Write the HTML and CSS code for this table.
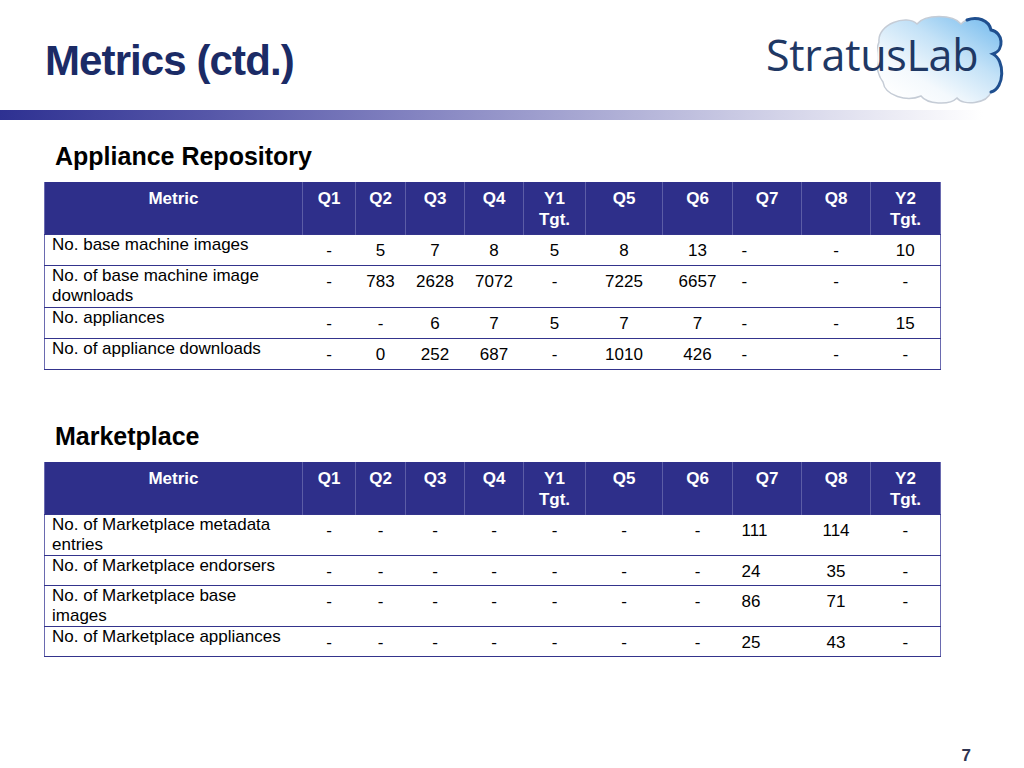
FILE: index.html
```html
<!DOCTYPE html>
<html>
<head>
<meta charset="utf-8">
<link rel="stylesheet" href="styles.css">
</head>
<body>
<div class="slide">
  <header class="header">
    <h1 class="title">Metrics (ctd.)</h1>
    <div class="logo">
      <svg class="cloud" viewBox="0 0 128 90" width="128" height="90">
        <defs>
          <linearGradient id="cg" x1="0.95" y1="0.05" x2="0.15" y2="0.95">
            <stop offset="0" stop-color="#79bdee"/>
            <stop offset="0.4" stop-color="#c4e2f7"/>
            <stop offset="0.75" stop-color="#f4f9fd"/>
            <stop offset="1" stop-color="#ffffff"/>
          </linearGradient>
        </defs>
        <path d="M2 28 C0 10 30 0 40 10 C48 0 76 0 84 10 C92 2 112 4 114 16 C126 18 128 36 116 40 C128 46 128 74 114 78 C110 90 86 92 80 84 C72 92 50 90 44 82 C30 88 8 82 6 68 C-2 58 -2 38 2 28 Z" fill="url(#cg)" stroke="#c5ccd6" stroke-width="1.5"/>
        <path d="M90 6 C100 2 112 6 114 16 C126 18 128 36 116 40 C128 46 128 74 114 78" fill="none" stroke="#1f4f8f" stroke-width="3" stroke-linecap="round"/>
      </svg>
      <span class="logo-text">StratusLab</span>
    </div>
  </header>
  <div class="bar"></div>

  <main class="content">
    <h2 class="section">Appliance Repository</h2>
    <table class="metrics">
      <colgroup>
        <col class="c-metric"><col class="c53"><col class="c50"><col class="c59"><col class="c59"><col class="c62"><col class="c77"><col class="c70"><col class="c69"><col class="c69"><col class="c70">
      </colgroup>
      <thead>
        <tr><th>Metric</th><th>Q1</th><th>Q2</th><th>Q3</th><th>Q4</th><th>Y1<br>Tgt.</th><th>Q5</th><th>Q6</th><th>Q7</th><th>Q8</th><th>Y2<br>Tgt.</th></tr>
      </thead>
      <tbody>
        <tr><td class="label">No. base machine images</td><td>-</td><td>5</td><td>7</td><td>8</td><td>5</td><td>8</td><td>13</td><td class="left">-</td><td>-</td><td>10</td></tr>
        <tr><td class="label">No. of base machine image downloads</td><td>-</td><td>783</td><td>2628</td><td>7072</td><td>-</td><td>7225</td><td>6657</td><td class="left">-</td><td>-</td><td>-</td></tr>
        <tr><td class="label">No. appliances</td><td>-</td><td>-</td><td>6</td><td>7</td><td>5</td><td>7</td><td>7</td><td class="left">-</td><td>-</td><td>15</td></tr>
        <tr><td class="label">No. of appliance downloads</td><td>-</td><td>0</td><td>252</td><td>687</td><td>-</td><td>1010</td><td>426</td><td class="left">-</td><td>-</td><td>-</td></tr>
      </tbody>
    </table>

    <h2 class="section second">Marketplace</h2>
    <table class="metrics compact">
      <colgroup>
        <col class="c-metric"><col class="c53"><col class="c50"><col class="c59"><col class="c59"><col class="c62"><col class="c77"><col class="c70"><col class="c69"><col class="c69"><col class="c70">
      </colgroup>
      <thead>
        <tr><th>Metric</th><th>Q1</th><th>Q2</th><th>Q3</th><th>Q4</th><th>Y1<br>Tgt.</th><th>Q5</th><th>Q6</th><th>Q7</th><th>Q8</th><th>Y2<br>Tgt.</th></tr>
      </thead>
      <tbody>
        <tr><td class="label">No. of Marketplace metadata entries</td><td>-</td><td>-</td><td>-</td><td>-</td><td>-</td><td>-</td><td>-</td><td class="left">111</td><td>114</td><td>-</td></tr>
        <tr><td class="label">No. of Marketplace endorsers</td><td>-</td><td>-</td><td>-</td><td>-</td><td>-</td><td>-</td><td>-</td><td class="left">24</td><td>35</td><td>-</td></tr>
        <tr><td class="label">No. of Marketplace base images</td><td>-</td><td>-</td><td>-</td><td>-</td><td>-</td><td>-</td><td>-</td><td class="left">86</td><td>71</td><td>-</td></tr>
        <tr><td class="label">No. of Marketplace appliances</td><td>-</td><td>-</td><td>-</td><td>-</td><td>-</td><td>-</td><td>-</td><td class="left">25</td><td>43</td><td>-</td></tr>
      </tbody>
    </table>
  </main>

  <footer class="footer"><span class="page-num">7</span></footer>
</div>
</body>
</html>
```

FILE: styles.css
```css
html, body {
  margin: 0;
  padding: 0;
  background: #ffffff;
}
body {
  font-family: "Liberation Sans", Arial, sans-serif;
}
.slide {
  width: 1024px;
  height: 768px;
  overflow: hidden;
  display: flex;
  flex-direction: column;
}
.header {
  height: 110px;
  display: flex;
  align-items: flex-start;
}
.title {
  margin: 37px 0 0 45px;
  font-size: 42px;
  line-height: 48px;
  font-weight: bold;
  color: #1b2b66;
  letter-spacing: -0.9px;
}
.logo {
  position: relative;
  margin: 12px 21px 0 auto;
  width: 237px;
  height: 90px;
  box-sizing: border-box;
  padding-top: 18px;
}
.cloud {
  position: absolute;
  left: 111px;
  top: 2px;
}
.logo-text {
  position: relative;
  display: block;
  font-family: "Open Sans", sans-serif;
  font-size: 43px;
  line-height: 50px;
  color: #1f3864;
  letter-spacing: -0.3px;
}
.bar {
  height: 10px;
  background: linear-gradient(to right, #2e3192 0%, #5556a8 20%, #8282c0 40%, #b3b3d8 62%, #e0e0ef 82%, #ffffff 96%);
}
.content {
  padding-left: 44px;
}
.section {
  margin: 21px 0 11px 11px;
  font-size: 25px;
  line-height: 30px;
  font-weight: bold;
  color: #000000;
}
.section.second {
  margin-top: 51px;
}
.metrics {
  width: 896px;
  table-layout: fixed;
  border-collapse: collapse;
  font-size: 17px;
  color: #000000;
  border-left: 1px solid #6a6ab0;
  border-right: 1px solid #6a6ab0;
  border-bottom: 1px solid #34348c;
}
.c-metric { width: 258px; }
.c53 { width: 53px; }
.c50 { width: 50px; }
.c59 { width: 59px; }
.c62 { width: 62px; }
.c77 { width: 77px; }
.c70 { width: 70px; }
.c69 { width: 69px; }
.metrics th {
  background: #2e2f8a;
  color: #ffffff;
  font-weight: bold;
  line-height: 21px;
  padding: 6px 0 4px;
  vertical-align: top;
  text-align: center;
  border-left: 1px solid #5c5da6;
}
.metrics th:first-child {
  border-left: none;
}
.metrics td {
  line-height: 20px;
  padding: 6px 0 4px;
  vertical-align: top;
  text-align: center;
  border-top: 1px solid #34348c;
}
.metrics td.label {
  text-align: left;
  padding: 0 10px 1px 7px;
}
.metrics.compact td {
  padding-bottom: 3px;
}
.metrics.compact td.label {
  padding-bottom: 0;
}
.metrics td.left {
  text-align: left;
  padding-left: 9px;
}
.footer {
  margin-top: auto;
  display: flex;
  justify-content: flex-end;
  padding: 0 53px 1px 0;
}
.page-num {
  font-size: 17px;
  line-height: 22px;
  font-weight: bold;
  color: #2f3552;
}
```
